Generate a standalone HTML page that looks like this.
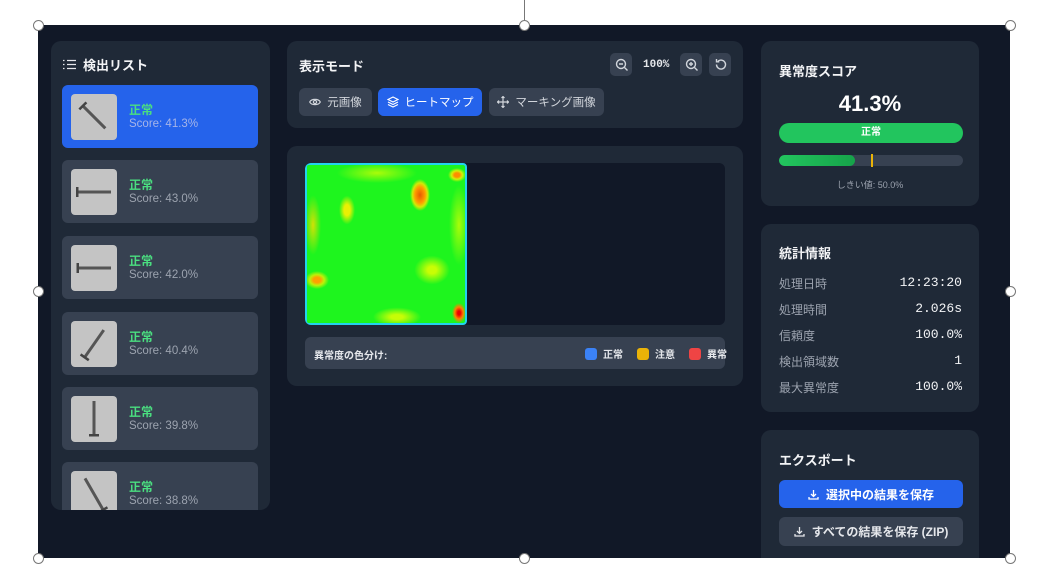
<!DOCTYPE html>
<html><head><meta charset="utf-8"><style>
*{box-sizing:border-box;margin:0;padding:0}
body{width:1045px;height:574px;background:#fff;position:relative;overflow:hidden;font-family:"Liberation Sans","Noto Sans CJK JP",sans-serif;color:#f3f4f6}
.a{position:absolute}
#frame{left:38px;top:25px;width:972px;height:533px;background:#111827;overflow:hidden}
.panel{position:absolute;background:#1f2937;border-radius:10px}
.item{position:absolute;left:11px;width:196px;height:63px;background:#374151;border-radius:6px}
.item.sel{background:#2563eb}
.thumb{position:absolute;left:9px;top:9px;width:46px;height:46px;background:#c4c4c4;border-radius:4px;overflow:hidden}
.st{position:absolute;left:67px;top:16px;color:#4ade80;font-weight:bold;font-size:12px}
.sc{position:absolute;left:67px;top:33px;color:#9ca3af;font-size:11.5px}
.sel .sc{color:#a5b4e8}
.h{font-weight:bold;font-size:13px;color:#f3f4f6;white-space:nowrap}
.btn{position:absolute;top:47px;height:28px;border-radius:6px;background:#374151;color:#d1d5db;font-size:11.5px;display:flex;align-items:center;justify-content:center;gap:6px;white-space:nowrap}
.ib{position:absolute;top:12px;width:22px;height:23px;background:#374151;border-radius:5px;display:flex;align-items:center;justify-content:center}
.mono{font-family:"Liberation Mono",monospace}
.row{position:absolute;left:18px;right:17px;display:flex;justify-content:space-between;font-size:12px}
.row span:first-child{color:#9ca3af}
.row span:last-child{font-family:"Liberation Mono",monospace;font-size:13px;color:#f3f4f6}
.hd{position:absolute;width:11px;height:11px;border-radius:50%;background:#fff;border:1.5px solid #777}
.lg{display:block;width:12px;height:12px;border-radius:3px}
</style></head><body>
<div class="a" style="left:524px;top:0;width:1px;height:25px;background:#777"></div>
<div id="frame" class="a">
 <!-- left panel -->
 <div class="panel" style="left:13px;top:16px;width:219px;height:469px;overflow:hidden">
  <div class="a h" style="left:12px;top:14px;display:flex;align-items:center;gap:7px">
   <svg width="13" height="11" viewBox="0 0 13 11" fill="none" stroke="#e5e7eb" stroke-width="1.3"><path d="M0 1.5h1.5M0 5.5h1.5M0 9.5h1.5M4 1.5h9M4 5.5h9M4 9.5h9"/></svg>検出リスト</div>
  <div class="item sel" style="top:44px"><div class="thumb"><svg width="46" height="46"><g transform="rotate(-45 23 23)"><rect x="21.5" y="7" width="3" height="32" fill="#555"/><rect x="18" y="6" width="10" height="2.5" fill="#444"/></g></svg></div><div class="st">正常</div><div class="sc">Score: 41.3%</div></div>
  <div class="item" style="top:119px"><div class="thumb"><svg width="46" height="46"><g transform="rotate(-90 23 23)"><rect x="21.5" y="6" width="3" height="34" fill="#555"/><rect x="18" y="5" width="10" height="2.5" fill="#444"/></g></svg></div><div class="st">正常</div><div class="sc">Score: 43.0%</div></div>
  <div class="item" style="top:195px"><div class="thumb"><svg width="46" height="46"><g transform="rotate(90 23 23)"><rect x="21.5" y="6" width="3" height="34" fill="#555"/><rect x="18" y="38" width="10" height="2.5" fill="#444"/></g></svg></div><div class="st">正常</div><div class="sc">Score: 42.0%</div></div>
  <div class="item" style="top:271px"><div class="thumb"><svg width="46" height="46"><g transform="rotate(35 23 23)"><rect x="21.5" y="6" width="3" height="34" fill="#555"/><rect x="18" y="38" width="10" height="2.5" fill="#444"/></g></svg></div><div class="st">正常</div><div class="sc">Score: 40.4%</div></div>
  <div class="item" style="top:346px"><div class="thumb"><svg width="46" height="46"><rect x="21.5" y="5" width="3" height="34" fill="#555"/><rect x="18" y="38" width="10" height="2.5" fill="#444"/></svg></div><div class="st">正常</div><div class="sc">Score: 39.8%</div></div>
  <div class="item" style="top:421px"><div class="thumb"><svg width="46" height="46"><g transform="rotate(-30 23 23)"><rect x="21.5" y="5" width="3" height="36" fill="#555"/><rect x="18" y="40" width="10" height="2.5" fill="#444"/></g></svg></div><div class="st">正常</div><div class="sc">Score: 38.8%</div></div>
 </div>
 <!-- center top -->
 <div class="panel" style="left:249px;top:16px;width:456px;height:87px">
  <div class="a h" style="left:12px;top:15px">表示モード</div>
  <div class="ib" style="left:323px"><svg width="13" height="13" fill="none" stroke="#d1d5db" stroke-width="1.4"><circle cx="6" cy="6" r="4.5"/><path d="M4 6h4M9.5 9.5l3 3"/></svg></div>
  <div class="a mono" style="left:356px;top:18px;font-size:11px;font-weight:bold;color:#e5e7eb">100%</div>
  <div class="ib" style="left:393px"><svg width="13" height="13" fill="none" stroke="#d1d5db" stroke-width="1.4"><circle cx="6" cy="6" r="4.5"/><path d="M4 6h4M6 4v4M9.5 9.5l3 3"/></svg></div>
  <div class="ib" style="left:422px"><svg width="13" height="13" fill="none" stroke="#d1d5db" stroke-width="1.4"><path d="M2.5 6.5a4.5 4.5 0 1 0 1.5-3.3M2.5 1v2.8h2.8"/></svg></div>
  <div class="btn" style="left:12px;width:73px"><svg width="12" height="10" fill="none" stroke="#d1d5db" stroke-width="1.2"><path d="M.7 5C2.5 1.5 9.5 1.5 11.3 5 9.5 8.5 2.5 8.5.7 5z"/><circle cx="6" cy="5" r="1.6"/></svg>元画像</div>
  <div class="btn" style="left:91px;width:104px;background:#2563eb;color:#fff"><svg width="12" height="12" fill="none" stroke="#fff" stroke-width="1.2"><path d="M6 1l5 2.5-5 2.5-5-2.5z M1 6l5 2.5 5-2.5M1 8.5l5 2.5 5-2.5"/></svg>ヒートマップ</div>
  <div class="btn" style="left:202px;width:115px"><svg width="12" height="12" fill="none" stroke="#d1d5db" stroke-width="1.2"><path d="M6 0.5v11M0.5 6h11M4.5 2L6 .5 7.5 2M4.5 10L6 11.5 7.5 10M2 4.5L.5 6 2 7.5M10 4.5L11.5 6 10 7.5"/></svg>マーキング画像</div>
 </div>
 <!-- center image panel -->
 <div class="panel" style="left:249px;top:121px;width:456px;height:240px">
  <div class="a" style="left:18px;top:17px;width:420px;height:162px;background:#111827;border-radius:6px;overflow:hidden">
   <div class="a" style="left:0;top:0;width:162px;height:162px;border-radius:4px;border:2px solid #22d3ee;background:
    radial-gradient(ellipse 10px 16px at 113px 30px,#e85a00,#ff9a00 50%,rgba(255,230,0,.8) 75%,transparent),
    radial-gradient(ellipse 7px 10px at 152px 148px,#e00 20%,#ff8000 60%,transparent),
    radial-gradient(ellipse 9px 7px at 150px 10px,#ff8c00 30%,rgba(255,240,0,.8) 60%,transparent),
    radial-gradient(ellipse 12px 9px at 10px 115px,#ffa000 30%,rgba(255,240,0,.7) 60%,transparent),
    radial-gradient(ellipse 10px 18px at 40px 45px,rgba(255,240,0,.9) 30%,transparent 80%),
    radial-gradient(ellipse 22px 18px at 125px 105px,rgba(230,255,0,.85) 20%,transparent 80%),
    radial-gradient(ellipse 30px 12px at 90px 152px,rgba(240,255,0,.8) 20%,transparent 80%),
    radial-gradient(ellipse 40px 10px at 70px 8px,rgba(230,255,0,.7),transparent),
    radial-gradient(ellipse 10px 40px at 152px 60px,rgba(230,255,0,.7),transparent),
    radial-gradient(ellipse 8px 30px at 6px 60px,rgba(255,220,0,.8),transparent),
    #1ef51e"></div>
  </div>
  <div class="a" style="left:18px;top:191px;width:420px;height:32px;background:#374151;border-radius:6px;font-size:10px;font-weight:bold;color:#e5e7eb;white-space:nowrap">
   <div class="a" style="left:9px;top:10px">異常度の色分け:</div>
   <div class="a" style="left:280px;top:9px;display:flex;align-items:center;gap:6px"><i class="lg" style="background:#3b82f6"></i>正常<i class="lg" style="background:#eab308;margin-left:8px"></i>注意<i class="lg" style="background:#ef4444;margin-left:8px"></i>異常</div>
  </div>
 </div>
 <!-- score -->
 <div class="panel" style="left:723px;top:16px;width:218px;height:165px">
  <div class="a h" style="left:18px;top:20px">異常度スコア</div>
  <div class="a" style="left:0;width:218px;top:50px;text-align:center;font-size:22px;font-weight:bold;color:#fff">41.3%</div>
  <div class="a" style="left:18px;top:82px;width:184px;height:20px;background:#22c55e;border-radius:10px;text-align:center;font-size:10px;font-weight:bold;line-height:20px;color:#fff">正常</div>
  <div class="a" style="left:18px;top:114px;width:184px;height:11px;background:#374151;border-radius:6px;overflow:hidden"><div style="width:76px;height:11px;background:linear-gradient(90deg,#22c55e,#16a34a);border-radius:6px"></div></div>
  <div class="a" style="left:110px;top:113px;width:2px;height:13px;background:#eab308"></div>
  <div class="a" style="left:0;width:218px;top:137px;text-align:center;font-size:9px;color:#9ca3af">しきい値: 50.0%</div>
 </div>
 <!-- stats -->
 <div class="panel" style="left:723px;top:199px;width:218px;height:188px">
  <div class="a h" style="left:18px;top:19px">統計情報</div>
  <div class="row" style="top:51px"><span>処理日時</span><span>12:23:20</span></div>
  <div class="row" style="top:77px"><span>処理時間</span><span>2.026s</span></div>
  <div class="row" style="top:103px"><span>信頼度</span><span>100.0%</span></div>
  <div class="row" style="top:129px"><span>検出領域数</span><span>1</span></div>
  <div class="row" style="top:155px"><span>最大異常度</span><span>100.0%</span></div>
 </div>
 <!-- export -->
 <div class="panel" style="left:723px;top:405px;width:218px;height:160px">
  <div class="a h" style="left:18px;top:20px">エクスポート</div>
  <div class="a" style="left:18px;top:50px;width:184px;height:28px;background:#2563eb;border-radius:6px;display:flex;align-items:center;justify-content:center;gap:7px;font-size:12px;font-weight:bold;color:#fff"><svg width="11" height="11" fill="none" stroke="#fff" stroke-width="1.3"><path d="M5.5 1v6.5M3 5l2.5 2.5L8 5M1 8v2h9V8"/></svg>選択中の結果を保存</div>
  <div class="a" style="left:18px;top:87px;width:184px;height:29px;background:#374151;border-radius:6px;display:flex;align-items:center;justify-content:center;gap:7px;font-size:12px;font-weight:bold;color:#e5e7eb"><svg width="11" height="11" fill="none" stroke="#e5e7eb" stroke-width="1.3"><path d="M5.5 1v6.5M3 5l2.5 2.5L8 5M1 8v2h9V8"/></svg>すべての結果を保存 (ZIP)</div>
 </div>
</div>
<div class="hd" style="left:33px;top:20px"></div>
<div class="hd" style="left:519px;top:20px"></div>
<div class="hd" style="left:1005px;top:20px"></div>
<div class="hd" style="left:33px;top:286px"></div>
<div class="hd" style="left:1005px;top:286px"></div>
<div class="hd" style="left:33px;top:553px"></div>
<div class="hd" style="left:519px;top:553px"></div>
<div class="hd" style="left:1005px;top:553px"></div>
</body></html>
